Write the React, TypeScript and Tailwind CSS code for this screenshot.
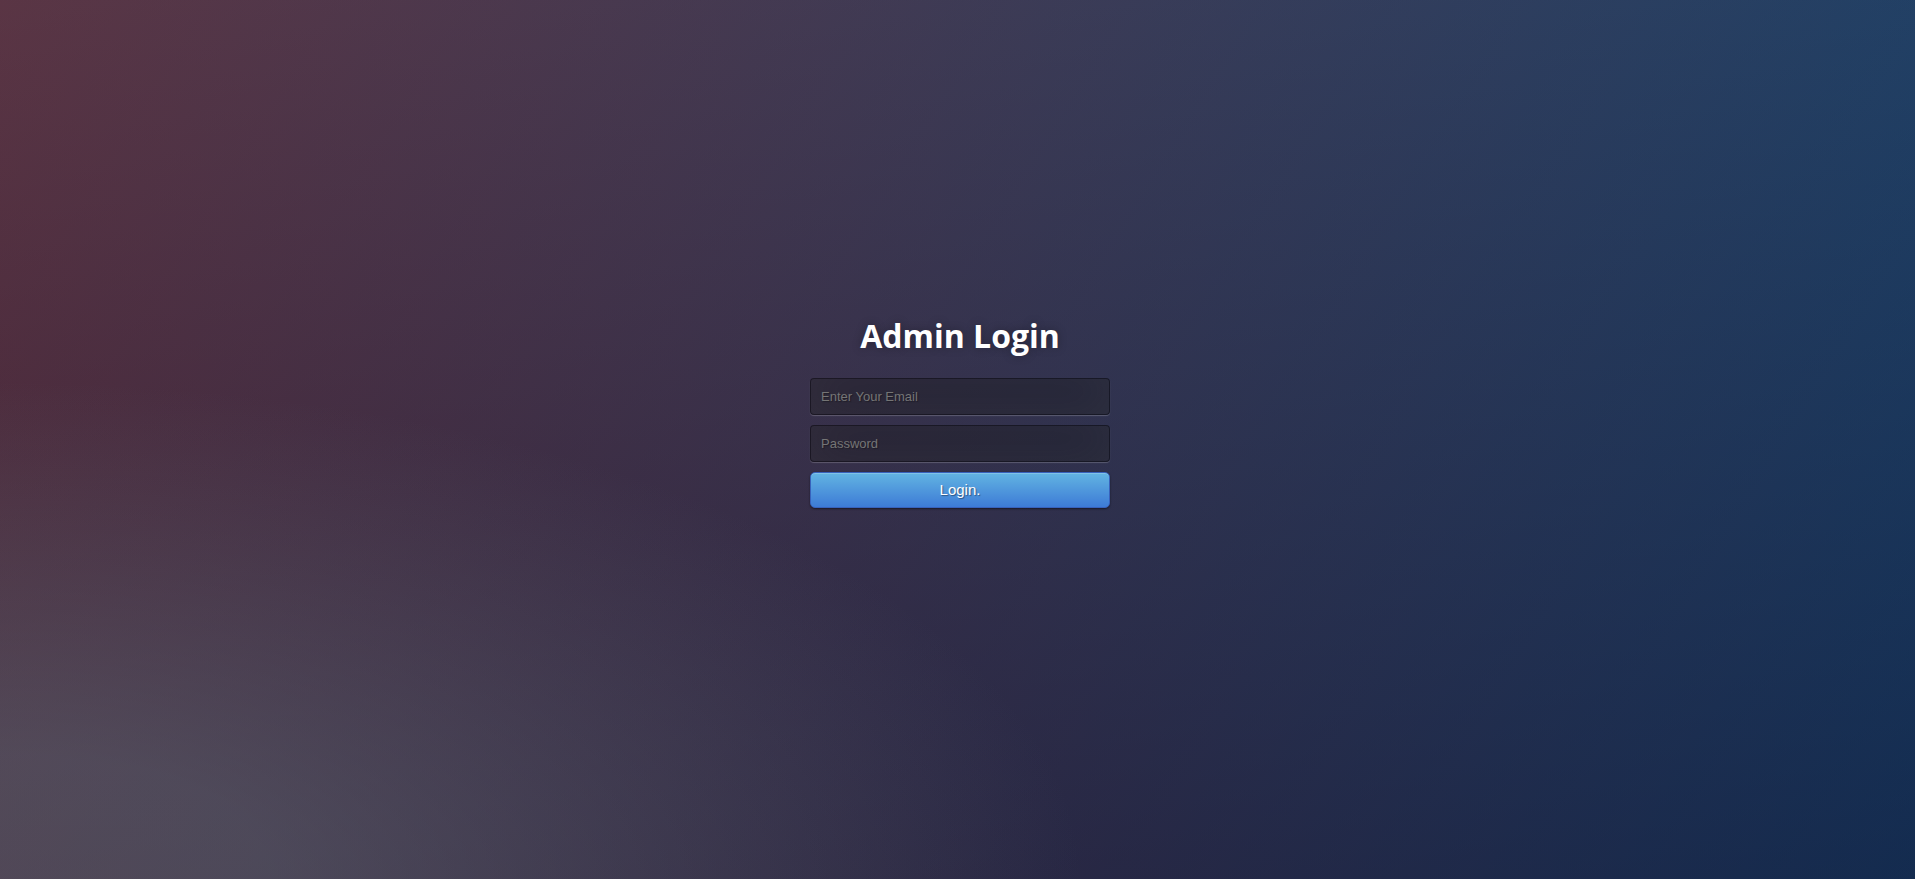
export default function App() {
  return (
    <div className="flex h-screen w-full items-center justify-center overflow-hidden bg-[#092756] bg-[radial-gradient(ellipse_farthest-corner_at_0%_100%,rgba(104,128,138,.4)_10%,rgba(138,114,76,0)_40%),linear-gradient(180deg,rgba(57,173,219,.25)_0%,rgba(42,60,87,.4)_100%),linear-gradient(122deg,#650d12_0%,#05204a_100%)] font-['Open_Sans',sans-serif]">
      {/* login box, 300x300 centred like the original */}
      <div className="ml-[5px] h-[300px] w-[300px] pt-[3px]">
        <h1 className="my-[21px] text-center text-[32px] font-bold leading-[normal] text-white [text-shadow:0_0_10px_rgba(0,0,0,0.3)]">
          Admin Login
        </h1>
        <form onSubmit={e => e.preventDefault()}>
          <input
            type="email"
            placeholder="Enter Your Email"
            className="mb-[10px] block w-full rounded-[4px] border border-black/30 bg-black/30 p-[10px] font-['Liberation_Sans',Arial,sans-serif] text-[13px] leading-[normal] text-white shadow-[inset_0_-5px_45px_rgba(100,100,100,0.2),0_1px_1px_rgba(255,255,255,0.2)] outline-none [text-shadow:1px_1px_1px_rgba(0,0,0,0.3)] placeholder:text-[#757575]"
          />
          <input
            type="password"
            placeholder="Password"
            className="mb-[10px] block w-full rounded-[4px] border border-black/30 bg-black/30 p-[10px] font-['Liberation_Sans',Arial,sans-serif] text-[13px] leading-[normal] text-white shadow-[inset_0_-5px_45px_rgba(100,100,100,0.2),0_1px_1px_rgba(255,255,255,0.2)] outline-none [text-shadow:1px_1px_1px_rgba(0,0,0,0.3)] placeholder:text-[#757575]"
          />
          <button
            type="submit"
            className="block h-[36px] w-full cursor-pointer rounded-[5px] border border-[#3762bc] bg-[linear-gradient(180deg,#62b4e2_0%,#3d7bd6_100%)] px-[14px] font-['Liberation_Sans',Arial,sans-serif] text-[15px] leading-[normal] text-white shadow-[inset_0_1px_0_rgba(255,255,255,0.2),0_1px_2px_rgba(0,0,0,0.5)] [text-shadow:1px_1px_1px_rgba(0,0,0,0.4)]"
          >
            Login.
          </button>
        </form>
      </div>
    </div>
  );
}
